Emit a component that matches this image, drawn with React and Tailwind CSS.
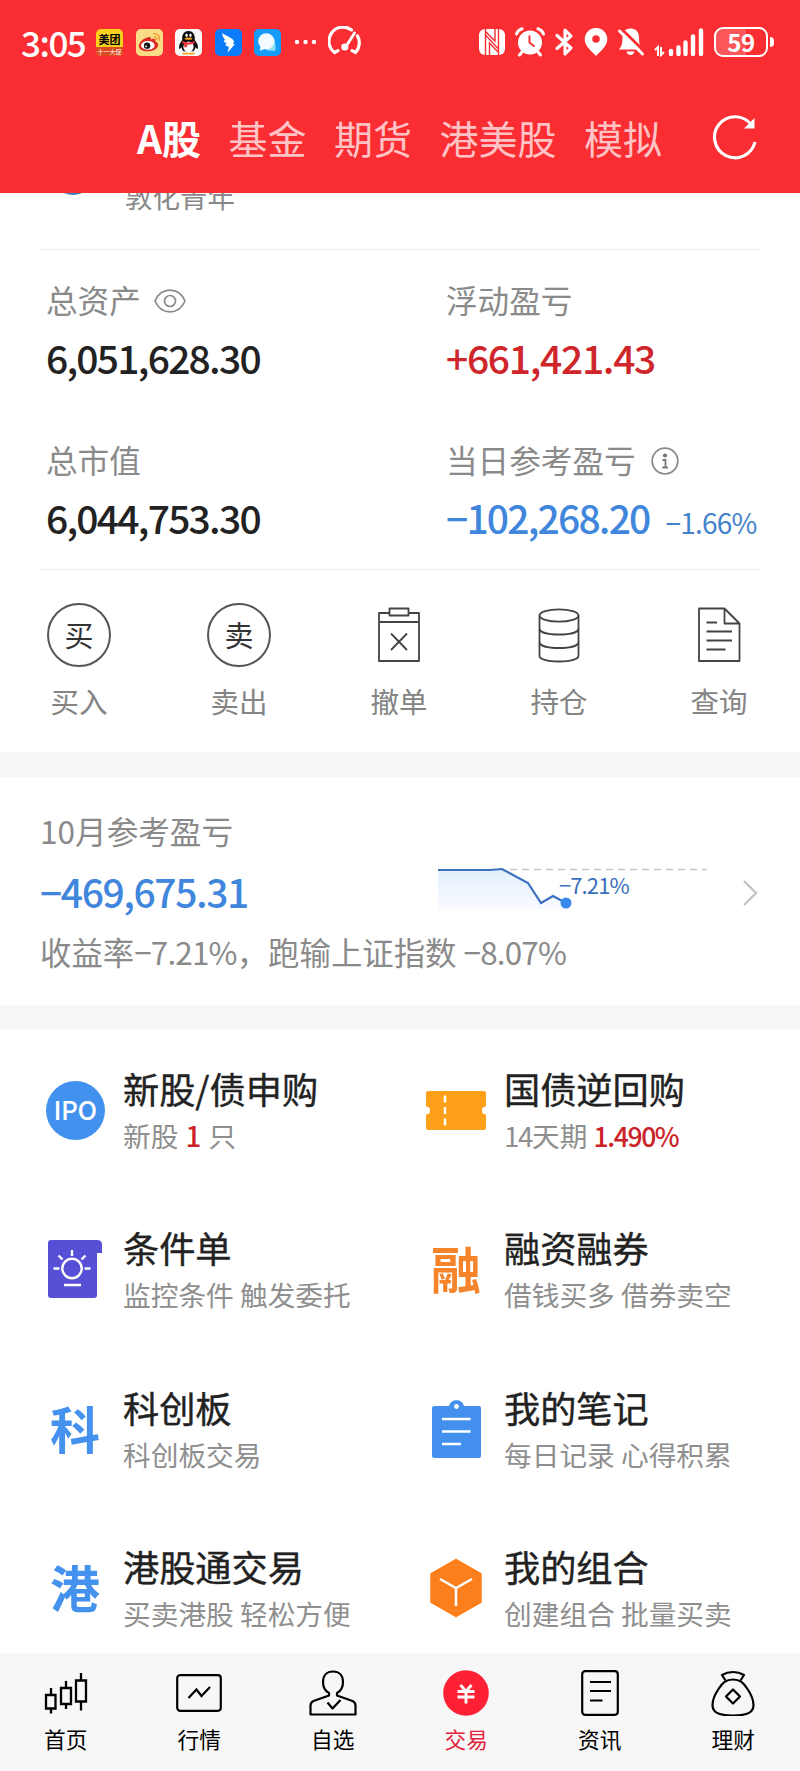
/* ================= DATA ================= */

const TABS = ["A股", "基金", "期货", "港美股", "模拟"];

const ACTIONS = [
  { label: "买入", icon: <RoundChar char="买" /> },
  { label: "卖出", icon: <RoundChar char="卖" /> },
  { label: "撤单", icon: <CancelIcon /> },
  { label: "持仓", icon: <StackIcon /> },
  { label: "查询", icon: <DocIcon /> },
];

const SERVICES = [
  {
    title: "新股/债申购",
    sub: (
      <>
        新股 <b className="mx-px font-medium text-[#cb2229]">1</b> 只
      </>
    ),
    icon: <IpoIcon />,
  },
  {
    title: "国债逆回购",
    sub: (
      <>
        <span className="tracking-[-1.4px]">14</span>天期{" "}
        <b className="text-[26.5px] font-medium tracking-[-1.4px] text-[#cb2229]">
          1.490%
        </b>
      </>
    ),
    icon: <TicketIcon />,
  },
  { title: "条件单", sub: "监控条件 触发委托", icon: <BulbIcon /> },
  {
    title: "融资融券",
    sub: "借钱买多 借券卖空",
    icon: <CharIcon char="融" color="text-[#f5842a]" />,
  },
  {
    title: "科创板",
    sub: "科创板交易",
    icon: <CharIcon char="科" color="text-[#4592ee]" />,
  },
  { title: "我的笔记", sub: "每日记录 心得积累", icon: <NoteIcon /> },
  {
    title: "港股通交易",
    sub: "买卖港股 轻松方便",
    icon: <CharIcon char="港" color="text-[#4592ee]" />,
  },
  { title: "我的组合", sub: "创建组合 批量买卖", icon: <CubeIcon /> },
];

const NAV = [
  { label: "首页", icon: <CandleIcon /> },
  { label: "行情", icon: <QuoteIcon /> },
  { label: "自选", icon: <UserIcon /> },
  { label: "交易", icon: <TradeIcon />, active: true },
  { label: "资讯", icon: <NewsIcon /> },
  { label: "理财", icon: <BagIcon /> },
];

/* ================= PAGE ================= */

export default function App() {
  return (
    <main className="flex h-[1771px] w-[800px] flex-col overflow-hidden bg-white font-['Noto_Sans_CJK_SC',sans-serif] text-[#222] whitespace-nowrap">
      <header className="h-[193px] shrink-0 bg-[#fa2d32] text-white">
        <StatusBar />
        <Tabs />
      </header>

      {/* ===== ACCOUNT ROW, SCROLLED UNDER THE HEADER ===== */}
      <div className="mx-[38px] flex h-[57px] shrink-0 overflow-hidden border-b border-[#eee]">
        <div className="-mt-[42px] ml-[13px] size-11 rounded-full bg-[#3b7fbd]" />
        <p className="-mt-[15px] ml-[30px] h-9 text-[27.5px] leading-9 text-[#888]">
          敦化青年
        </p>
      </div>

      {/* ===== ASSETS ===== */}
      <section className="mx-[38px] grid h-[320px] shrink-0 grid-cols-[400px_1fr] content-start gap-y-[60px] border-b border-[#eee] pt-[31px] pl-2">
        <Stat
          label="总资产"
          labelIcon={<EyeIcon />}
          value="6,051,628.30"
          tracking="tracking-[-1.75px]"
        />
        <Stat
          label="浮动盈亏"
          value="+661,421.43"
          color="text-[#cf262c]"
          tracking="tracking-[-1.3px]"
        />
        <Stat
          label="总市值"
          value="6,044,753.30"
          tracking="tracking-[-1.75px]"
        />
        <Stat
          label="当日参考盈亏"
          labelIcon={<InfoIcon />}
          value="−102,268.20"
          color="text-[#3f86dc]"
          tracking="tracking-[-1.8px]"
          extra="−1.66%"
        />
      </section>

      {/* ===== ACTIONS ===== */}
      <section className="-ml-px flex h-[182px] shrink-0 pt-[33px]">
        {ACTIONS.map((item) => (
          <div key={item.label} className="flex w-40 flex-col items-center">
            <div className="flex h-16 items-center">{item.icon}</div>
            <span className="mt-4 text-[28.5px] leading-9 text-[#848484]">
              {item.label}
            </span>
          </div>
        ))}
      </section>

      <div className="h-[25px] shrink-0 bg-[#f7f7f7]" />

      {/* ===== MONTH RESULT ===== */}
      <section className="flex h-[228px] shrink-0 justify-between pt-[35px] pr-[42px] pl-10">
        <div>
          <p className="text-[31.6px] leading-9 text-[#8a8a8a]">10月参考盈亏</p>
          <div className="mt-[18px] flex h-12 items-center">
            <p className="w-[398px] pt-px text-[39px] leading-[48px] font-medium tracking-[-1.4px] text-[#3f86dc]">
              −469,675.31
            </p>
            <TrendChart />
          </div>
          <p className="mt-5 text-[31.4px] leading-9 text-[#8a8a8a]">
            收益率<span className="tracking-[-0.8px]">−7.21%</span>，跑输上证指数{" "}
            <span className="tracking-[-0.8px]">−8.07%</span>
          </p>
        </div>
        <svg className="mt-[67px] h-7 w-4" viewBox="0 0 16 28" fill="none">
          <path d="M2 2l12 12L2 26" stroke="#c4c4c4" strokeWidth="2.4" />
        </svg>
      </section>

      <div className="h-[25px] shrink-0 bg-[#f7f7f7]" />

      {/* ===== SERVICES ===== */}
      <section className="grid h-[623px] shrink-0 auto-rows-[159.4px] grid-cols-[381px_1fr] overflow-hidden pl-[42px]">
        {SERVICES.map((item) => (
          <div key={item.title} className="flex pt-9">
            <div className="mt-[14px] flex h-[60px] w-[66px] items-center justify-center">
              {item.icon}
            </div>
            <div className="ml-[15px]">
              <h3 className="text-[36.2px] leading-[44px] font-normal [-webkit-text-stroke:0.4px_#222]">
                {item.title}
              </h3>
              <p className="mt-2 text-[27.7px] leading-[34px] text-[#8f8f8f]">
                {item.sub}
              </p>
            </div>
          </div>
        ))}
      </section>

      {/* ===== BOTTOM NAV ===== */}
      <nav className="-ml-px grid h-[118px] w-[801px] shrink-0 grid-cols-6 bg-[#f7f7f7] pt-[15px] text-black">
        {NAV.map((item) => (
          <div key={item.label} className="flex flex-col items-center">
            <div className="flex h-[50px] items-center">{item.icon}</div>
            <span
              className={`mt-[7px] text-[21.7px] leading-7 ${item.active ? "text-[#e0223a]" : ""}`}
            >
              {item.label}
            </span>
          </div>
        ))}
      </nav>
    </main>
  );
}

/* ================= HEADER ================= */

function StatusBar() {
  return (
    <div className="flex h-[84px] items-center pl-[21px]">
      <span className="w-[75px] pb-px text-[35px] leading-[44px] font-medium tracking-[-1.5px]">
        3:05
      </span>
      <div className="flex gap-[12.5px]">
        <MeituanIcon />
        <WeiboIcon />
        <PenguinIcon />
        <WingIcon />
        <ChatIcon />
      </div>
      <svg className="ml-3 h-2 w-6" viewBox="0 0 24 8" fill="#fff">
        <circle cx="4" cy="4" r="2.2" />
        <circle cx="12.5" cy="4" r="2.2" />
        <circle cx="21" cy="4" r="2.2" />
      </svg>
      <svg
        className="ml-[11px] h-8 w-[34px]"
        viewBox="0 0 34 32"
        fill="none"
        stroke="#fff"
        strokeWidth="3.2"
        strokeLinecap="round"
      >
        <path d="M23.500 4A14 14 0 0 0 6.500 26.500l3.500-1.800M29.500 10a14 14 0 0 1-2 16.500l-3.500-1.800" />
        <path d="M26.500 7L18 20.500" strokeWidth="2.8" />
        <circle cx="16.800" cy="21" r="2" fill="#fff" />
      </svg>

      {/* system icons */}
      <svg className="ml-[116px] h-7 w-[28px]" viewBox="0 0 28 28">
        <rect x="1" y="1" width="26" height="26" rx="6" fill="#fff" />
        <path
          d="M7.500 27V1M7.500 3.500L17 13V1M20.500 27V1M20.500 24.500L11.500 15V27M8 7.500L20 20.500"
          fill="none"
          stroke="#fa2d32"
          strokeWidth="1.400"
        />
      </svg>
      <svg className="ml-[9px] h-[30px] w-[30px]" viewBox="0 0 30 30">
        <circle cx="15" cy="15.500" r="12" fill="#fff" />
        <path
          d="M1.500 7Q3 3 7 1.800M28.500 7Q27 3 23 1.800M7 25l-2.500 3M23 25l2.500 3"
          stroke="#fff"
          strokeWidth="3"
          strokeLinecap="round"
          fill="none"
        />
        <path d="M14.500 8.500v7l5 4" stroke="#fa2d32" strokeWidth="2" fill="none" />
      </svg>
      <svg
        className="ml-[10px] h-[30px] w-5"
        viewBox="0 0 20 30"
        fill="none"
        stroke="#fff"
        strokeWidth="3.1"
        strokeLinejoin="round"
        strokeLinecap="round"
      >
        <path d="M2 8.500l14 12.500-6 6V3l6 6L2 21.500" />
      </svg>
      <svg className="ml-[9px] h-[30px] w-6" viewBox="0 0 24 30">
        <path
          d="M12 1a11.300 11.300 0 0 1 11.300 11.300C23.300 19 16 25 12 29 8 25 .7 19 .7 12.300A11.300 11.300 0 0 1 12 1z"
          fill="#fff"
        />
        <circle cx="12" cy="12" r="3.800" fill="#fa2d32" />
      </svg>
      <svg className="ml-[9px] h-[30px] w-7" viewBox="0 0 28 30">
        <path
          d="M13.500 1.500c6 0 8.500 4 8.500 9 0 6 1 9 3.500 12H2c2.500-3 3.500-6 3.500-12 0-5 2-9 8-9zM9.500 24.500h8c-.5 2-2 3.500-4 3.500s-3.500-1.500-4-3.500z"
          fill="#fff"
        />
        <path d="M5 2.500l22 21.500" stroke="#fa2d32" strokeWidth="3" />
        <path d="M2.500 4l23 23" stroke="#fff" strokeWidth="3" strokeLinecap="round" />
      </svg>
      <svg className="ml-[9px] h-[30px] w-[50px]" viewBox="0 0 50 30">
        <path
          d="M1 23l3-3v9M7 20v8l3-3"
          stroke="#fff"
          strokeWidth="2"
          fill="none"
        />
        <path
          d="M17 24v3M24.500 20.500v6.500M31.500 15.500v11.500M39 9.500v17.500M47 3.500v23.500"
          stroke="#fff"
          strokeWidth="4.400"
          strokeLinecap="round"
        />
      </svg>
      <div className="ml-[10px] flex h-[30px] w-[54px] items-center justify-center rounded-[9px] border-2 border-white bg-linear-to-r from-white/20 from-60% to-transparent to-60% text-[24px] leading-7 font-bold tracking-[-0.5px]">
        59
      </div>
      <div className="ml-[2px] h-2.5 w-[3.500px] rounded-r bg-white" />
    </div>
  );
}

function Tabs() {
  return (
    <div className="flex h-[108px] items-center pb-[2px] pl-[137px] text-[39px]">
      <div className="flex gap-[27.500px]">
        {TABS.map((tab, i) => (
          <span
            key={tab}
            className={i === 0 ? "font-bold" : "text-[#ffc3c6]"}
          >
            {tab}
          </span>
        ))}
      </div>
      <svg className="ml-[50px] h-12 w-12" viewBox="0 0 48 48" fill="none">
        <path
          d="M43 29A20.500 20.500 0 1 1 39.500 12"
          stroke="#fff"
          strokeWidth="3.200"
        />
        <path d="M42.500 5v10.500H32z" fill="#fff" />
      </svg>
    </div>
  );
}

/* ================= STAT ================= */

function Stat({ label, labelIcon, value, tracking, color = "text-[#222]", extra }) {
  return (
    <div>
      <div className="flex h-9 items-center text-[31.6px] leading-9 text-[#8a8a8a]">
        {label}
        {labelIcon}
      </div>
      <div className="mt-4 flex h-12 items-baseline leading-[48px]">
        <span className={`text-[39px] font-medium ${tracking} ${color}`}>
          {value}
        </span>
        {extra && (
          <span className="ml-[16px] text-[28px] tracking-[-0.8px] text-[#4382cc]">
            {extra}
          </span>
        )}
      </div>
    </div>
  );
}

function TrendChart() {
  return (
    <svg className="-mt-px h-[60px] w-[272px]" viewBox="0 0 272 60">
      <defs>
        <linearGradient id="trend" x1="0" y1="0" x2="0" y2="1">
          <stop offset="0" stopColor="#e3effc" />
          <stop offset="1" stopColor="#f9fbff" />
        </linearGradient>
      </defs>
      <path d="M0 10h52l12-1 26 14 13 20 12-7 13 8v5H0z" fill="url(#trend)" />
      <path d="M72 9.500h197" stroke="#c8c8c8" strokeWidth="1.500" strokeDasharray="7 5" />
      <path
        d="M0 10h52l12-1 26 14 13 20 12-7 13 7"
        fill="none"
        stroke="#3a70bd"
        strokeWidth="2.200"
      />
      <circle cx="128" cy="43" r="5.500" fill="#3888ee" />
      <text x="121" y="33.500" fontSize="22" letterSpacing="-0.9" fill="#3a70bd">
        −7.21%
      </text>
    </svg>
  );
}

/* ================= STATUS APP ICONS ================= */

function MeituanIcon() {
  return (
    <div className="flex size-[27px] flex-col items-center overflow-hidden rounded-[5px] bg-[#fcd21c] text-black">
      <span className="mt-[3px] text-[11px] leading-[14px] font-bold">美团</span>
      <span className="mt-px w-full bg-[#dc4a20] text-center text-[6px] leading-[9px] text-white">
        十一大促
      </span>
    </div>
  );
}

function WeiboIcon() {
  return (
    <svg className="size-[27px]" viewBox="0 0 28 28">
      <rect width="28" height="28" rx="5" fill="#fbdc86" />
      <path
        d="M11 9c-4 1-8 5-8 8.500C3 21 7 23 12 23c6 0 11-3 11-6.500 0-2-1.500-3-3-3.300.8-2.500-.5-4-4.500-2.400C16 8 14 7.500 11 9z"
        fill="#dc2a22"
      />
      <ellipse cx="12.300" cy="17" rx="7" ry="4.600" fill="#fff" />
      <circle cx="11.500" cy="17.300" r="3.300" fill="#111" />
      <circle cx="10.500" cy="18" r="1" fill="#fff" />
      <path
        d="M18 5c4-1 7 2.500 6.300 7M18.500 8.500c2-.5 3.300 1 3 3"
        stroke="#ef9a2d"
        strokeWidth="1.500"
        fill="none"
      />
    </svg>
  );
}

function PenguinIcon() {
  return (
    <svg className="size-[27px]" viewBox="0 0 28 28">
      <rect width="28" height="28" rx="5" fill="#f8f8f8" />
      <path
        d="M14 2c-4.500 0-6.500 3.500-6.500 7.500v2C5 14.500 3.500 18 4.500 20.500c.7.500 1.500-.5 2.300-1.500.4 2 1.200 3.200 2.200 4.200h10c1-1 1.800-2.200 2.200-4.200.8 1 1.600 2 2.300 1.500 1-2.500-.5-6-3-9v-2C20.500 5.500 18.500 2 14 2z"
        fill="#0b0b0b"
      />
      <ellipse cx="14" cy="18.500" rx="5.300" ry="5.500" fill="#fff" />
      <ellipse cx="12" cy="6.500" rx="1.200" ry="1.800" fill="#fff" />
      <ellipse cx="16" cy="6.500" rx="1.200" ry="1.800" fill="#fff" />
      <ellipse cx="14" cy="10" rx="4" ry="1.100" fill="#f5a81c" />
      <path d="M7.500 12.500q6.500 3 13 0v2.300q-6.500 3-13 0zM9.500 15h3v4h-3z" fill="#e8333a" />
      <path d="M8.500 25.500h4.500M15 25.500h4.500" stroke="#f5a81c" strokeWidth="2" strokeLinecap="round" />
    </svg>
  );
}

function WingIcon() {
  return (
    <svg className="size-[27px]" viewBox="0 0 28 28">
      <rect width="28" height="28" rx="5" fill="#0a7cfa" />
      <path
        d="M7.500 4c2 2.500 9 4.500 11.500 7.500 1 1.300.5 2.800-.3 4h2L13 24.500l1.500-6c-2-.5-3.300-1.500-4-2.800l2-.2c-2-1-3.200-2.400-3.600-4l2 .3C8.700 9.500 7.500 7 7.500 4z"
        fill="#fff"
      />
    </svg>
  );
}

function ChatIcon() {
  return (
    <svg className="size-[27px]" viewBox="0 0 28 28">
      <rect width="28" height="28" rx="5" fill="#159bf8" />
      <path d="M12 6c6 0 10 3.500 10 8.500 0 3 1 5 0 8-5 0-10 .5-12-3z" fill="#8fe0fb" />
      <circle cx="12.700" cy="12.700" r="8.300" fill="#f2fbff" />
      <path d="M7 17l-1 5.500 6-2z" fill="#f2fbff" />
    </svg>
  );
}

/* ================= LABEL ICONS ================= */

function EyeIcon() {
  return (
    <svg
      className="mt-1 ml-[13px] h-6 w-8"
      viewBox="0 0 32 24"
      fill="none"
      stroke="#8a8a8a"
      strokeWidth="1.700"
    >
      <path d="M1 12C4 5 9.500 1.200 16 1.200S28 5 31 12c-3 7-8.500 10.800-15 10.800S4 19 1 12z" />
      <circle cx="16" cy="12" r="5.500" />
    </svg>
  );
}

function InfoIcon() {
  return (
    <svg className="mt-1 ml-[15px] size-7" viewBox="0 0 28 28" fill="none">
      <circle cx="14" cy="14" r="12.800" stroke="#8a8a8a" strokeWidth="1.800" />
      <circle cx="14" cy="8.500" r="2.100" fill="#777" />
      <path d="M11.500 13h3v7.500M11.300 20.500h5.600" stroke="#777" strokeWidth="1.800" />
    </svg>
  );
}

/* ================= ACTION ICONS ================= */

function RoundChar({ char }) {
  return (
    <div className="flex size-16 items-center justify-center rounded-full border-2 border-[#555] pb-[2px] text-[29px] leading-none text-[#333]">
      {char}
    </div>
  );
}

function CancelIcon() {
  return (
    <svg
      className="h-[56px] w-[44px]"
      viewBox="0 0 44 56"
      fill="none"
      stroke="#444"
      strokeWidth="1.800"
      strokeLinejoin="round"
    >
      <path d="M12.500 6H2v48h40V6H31.500M2 15h40" />
      <path d="M12.500 1.500h19v7h-19z" />
      <path d="M14 26.500l16 16.500M30 26.500L14 43" />
    </svg>
  );
}

function StackIcon() {
  return (
    <svg
      className="h-[56px] w-[44px]"
      viewBox="0 0 44 56"
      fill="none"
      stroke="#444"
      strokeWidth="1.800"
    >
      <ellipse cx="22" cy="8.500" rx="19.500" ry="6.200" />
      <path d="M2.500 8.500V49C2.500 52 10 54.500 22 54.500S41.500 52 41.500 49V8.500" />
      <path d="M2.500 22C3 25 10 27.500 22 27.500S41 25 41.500 22M2.500 35.500C3 38.500 10 41 22 41s19-2.500 19.500-5.500" />
    </svg>
  );
}

function DocIcon() {
  return (
    <svg
      className="h-[56px] w-[44px]"
      viewBox="0 0 44 56"
      fill="none"
      stroke="#444"
      strokeWidth="1.800"
      strokeLinejoin="round"
    >
      <path d="M27.500 1.500H2v52.500h40.500V16.500zM27.500 1.500v15h15" />
      <path d="M9.500 15.500h10.500M9.500 24.500H35M9.500 33.500H35M9.500 42.500h19" />
    </svg>
  );
}

/* ================= SERVICE ICONS ================= */

function CharIcon({ char, color }) {
  return (
    <span className={`-mt-1 text-[50px] leading-[60px] font-bold ${color}`}>
      {char}
    </span>
  );
}

function IpoIcon() {
  return (
    <div className="flex size-[59px] items-center justify-center rounded-full bg-[#4291ee] pb-[2px] text-[26px] leading-none font-medium tracking-[-0.5px] text-white">
      IPO
    </div>
  );
}

function TicketIcon() {
  return (
    <svg className="h-[39px] w-[60px]" viewBox="0 0 60 39">
      <path
        d="M2.500 0h55q2.500 0 2.500 2.500V15.500a4 4 0 0 0 0 8v13q0 2.500-2.500 2.500h-55Q0 39 0 36.500V23.500a4 4 0 0 0 0-8V2.500Q0 0 2.500 0z"
        fill="#fea119"
      />
      <path d="M19 4.500v30" stroke="#fff" strokeWidth="2.400" strokeDasharray="7 4.500" />
    </svg>
  );
}

function BulbIcon() {
  return (
    <svg className="h-[58px] w-[54px]" viewBox="0 0 54 58">
      <path
        d="M3 0h46q5 0 5 5v8h-5v42q0 3-3 3H3q-3 0-3-3V3q0-3 3-3z"
        fill="#574fd6"
      />
      <g stroke="#fff" strokeWidth="2.400" fill="none">
        <circle cx="24" cy="28.500" r="9.700" />
        <path d="M24 10v6M5.500 28.500h6M36.500 28.500h6M10.500 15.500l4 4M37.500 15.500l-4 4M16 45h17" />
      </g>
    </svg>
  );
}

function NoteIcon() {
  return (
    <svg className="-mt-[2px] h-[60px] w-[49px]" viewBox="0 0 49 60">
      <path
        d="M2 8h15a7.800 7.800 0 0 1 15 0h15q2 0 2 2v48q0 2-2 2H2q-2 0-2-2V10q0-2 2-2z"
        fill="#4390ee"
      />
      <circle cx="24.500" cy="8.500" r="2.400" fill="#fff" />
      <path d="M10 21h28.500M10 33.500h28.500M10 46h19" stroke="#fff" strokeWidth="2.500" />
    </svg>
  );
}

function CubeIcon() {
  return (
    <svg className="h-[60px] w-[54px]" viewBox="0 0 54 60">
      <path
        d="M27 2L51.500 16v28L27 58 2.500 44V16z"
        fill="#fb7f1c"
        stroke="#fb7f1c"
        strokeWidth="2.500"
        strokeLinejoin="round"
      />
      <path d="M11 21l16 9 16-9M27 30v18" stroke="#fff" strokeWidth="2.500" fill="none" />
    </svg>
  );
}

/* ================= NAV ICONS ================= */

function CandleIcon() {
  return (
    <svg
      className="h-[46px] w-[44px]"
      viewBox="0 0 44 46"
      fill="none"
      stroke="#000"
      strokeWidth="2.300"
    >
      <path d="M2 25h9.500v13.500H2zM17 18h10v16H17zM32 10.500h10v21H32z" />
      <path d="M7 18v7M7 38.500v5M22 11v7M22 34v5M37 3v7.500M37 31.500v9" />
    </svg>
  );
}

function QuoteIcon() {
  return (
    <svg
      className="h-[38px] w-[46px]"
      viewBox="0 0 46 38"
      fill="none"
      stroke="#000"
      strokeWidth="2.200"
    >
      <rect x="1.200" y="1.200" width="43.600" height="35.600" rx="3" />
      <path d="M12.500 24l8-8.500 5 6.500 8.500-9" />
    </svg>
  );
}

function UserIcon() {
  return (
    <svg
      className="h-[46px] w-[48px]"
      viewBox="0 0 48 46"
      fill="none"
      stroke="#000"
      strokeWidth="2.200"
      strokeLinejoin="round"
    >
      <path d="M20 23c-4-2-6-6-6-11C14 5.500 18 1.500 24 1.500S34 5.500 34 12c0 5-2 9-6 11v2.500l15.500 5.500q3 1.300 3 4.500v9h-45v-9q0-3.200 3-4.500L20 25.500z" />
      <path d="M18.500 32.500l5 6 8-8.500" />
    </svg>
  );
}

function TradeIcon() {
  return (
    <svg className="size-[46px]" viewBox="0 0 46 46">
      <circle cx="23" cy="23" r="22.800" fill="#fd2133" />
      <path
        d="M17.500 15l5.500 6.500 5.500-6.500M14.500 21.500h17M14.500 27h17M23 21.500v12"
        stroke="#fff"
        strokeWidth="2.900"
        fill="none"
      />
    </svg>
  );
}

function NewsIcon() {
  return (
    <svg
      className="h-[46px] w-[38px]"
      viewBox="0 0 38 46"
      fill="none"
      stroke="#000"
      strokeWidth="2.200"
    >
      <rect x="1.200" y="1.200" width="35.600" height="43.600" rx="3" />
      <path d="M9 12h21M9 21h21M9 30.500h12.500" />
    </svg>
  );
}

function BagIcon() {
  return (
    <svg
      className="h-[46px] w-[44px]"
      viewBox="0 0 44 46"
      fill="none"
      stroke="#000"
      strokeWidth="2.200"
      strokeLinejoin="round"
    >
      <path d="M14.500 10.500l-3.500-5.500Q16 2 22 2t11 3l-3.500 5.500" />
      <path d="M22 9.500c7 0 10.500 3 14.500 9.500 4 6 6 11 6 16 0 7-5 10.500-20.500 10.500S1.500 42 1.500 35c0-5 2-10 6-16C11.500 12.500 15 9.500 22 9.500z" />
      <path d="M22 19.500l7 7-7 7-7-7z" />
    </svg>
  );
}
